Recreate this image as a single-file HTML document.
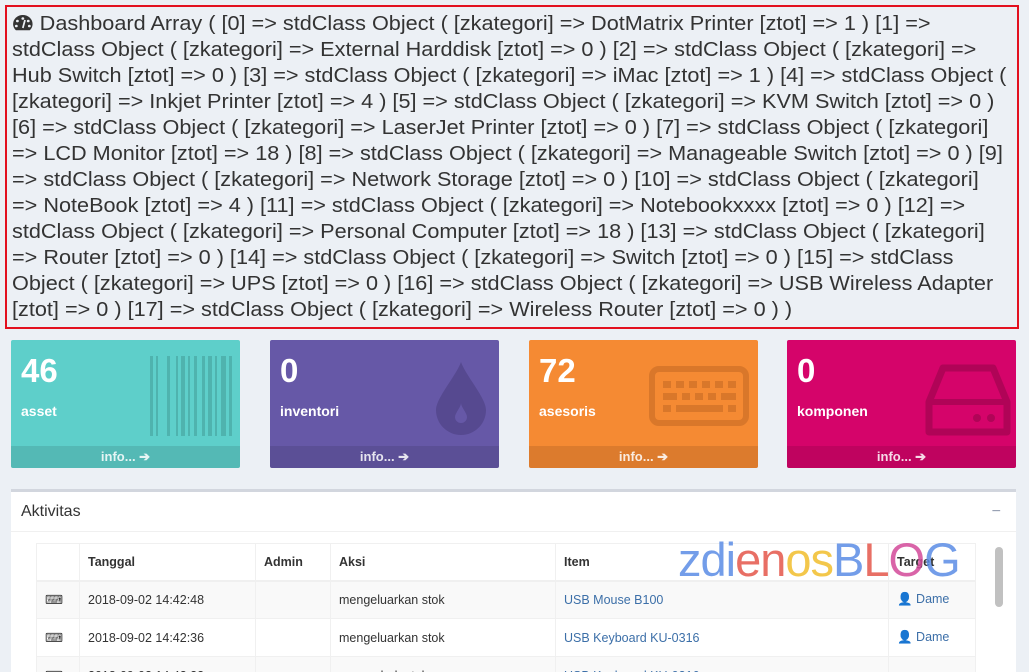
<!DOCTYPE html>
<html><head><meta charset="utf-8"><style>
*{box-sizing:border-box}
html,body{margin:0;width:1029px;height:672px;overflow:hidden}
body{background:#ecf0f5;font-family:"Liberation Sans",sans-serif;color:#333;position:relative}
.dump{position:absolute;left:5px;top:5px;width:1014px;height:324px;border:2px solid #e3101f;overflow:hidden}
.dump .in{position:absolute;left:5px;top:4px;font-size:20px;line-height:26px;color:#333;white-space:nowrap;transform:scaleX(1.083);transform-origin:0 0}
.sb{position:absolute;top:340px;width:229px;height:128px;border-radius:2px;color:#fff;overflow:hidden}
.sb .n{position:absolute;left:10px;top:12px;font-size:33px;font-weight:bold}
.sb .l{position:absolute;left:10px;top:63px;font-size:14px;font-weight:bold}
.sb .f{position:absolute;left:0;bottom:0;width:100%;height:22px;background:rgba(0,0,0,.1);text-align:center;font-size:13px;line-height:22px;font-weight:bold;color:rgba(255,255,255,.85)}
.box{position:absolute;left:11px;top:489px;width:1005px;height:183px;background:#fff;border-top:3px solid #d2d6de;overflow:hidden}
.hd{height:40px;border-bottom:1px solid #f0f0f0;font-size:16px;line-height:40px;padding-left:10px}
table{position:absolute;left:25px;top:51px;border-collapse:collapse;font-size:12.5px;width:940px}
td,th{border:1px solid #f0f0f0;padding:0 8px;text-align:left;height:38px}
th{height:37px;border-bottom:2px solid #f0f0f0}
tr.o td{background:#f9f9f9}
a{color:#3c6fa8;text-decoration:none}
</style></head><body>
<div class="dump"><div class="in"><svg width="20" height="17" viewBox="0 0 20 17" style="vertical-align:-1px"><path d="M10 1A9 9 0 0 0 1 10c0 2.5 1 4.7 2.6 6.3h12.8A9 9 0 0 0 19 10 9 9 0 0 0 10 1z" fill="#333"/><circle cx="10" cy="4.5" r="1.3" fill="#ecf0f5"/><circle cx="5" cy="7" r="1.3" fill="#ecf0f5"/><circle cx="15" cy="7" r="1.3" fill="#ecf0f5"/><circle cx="4" cy="12" r="1.3" fill="#ecf0f5"/><circle cx="16" cy="12" r="1.3" fill="#ecf0f5"/><path d="M10 14L12 6" stroke="#ecf0f5" stroke-width="1.6"/></svg> Dashboard Array ( [0] =&gt; stdClass Object ( [zkategori] =&gt; DotMatrix Printer [ztot] =&gt; 1 ) [1] =&gt;<br>stdClass Object ( [zkategori] =&gt; External Harddisk [ztot] =&gt; 0 ) [2] =&gt; stdClass Object ( [zkategori] =&gt;<br>Hub Switch [ztot] =&gt; 0 ) [3] =&gt; stdClass Object ( [zkategori] =&gt; iMac [ztot] =&gt; 1 ) [4] =&gt; stdClass Object (<br>[zkategori] =&gt; Inkjet Printer [ztot] =&gt; 4 ) [5] =&gt; stdClass Object ( [zkategori] =&gt; KVM Switch [ztot] =&gt; 0 )<br>[6] =&gt; stdClass Object ( [zkategori] =&gt; LaserJet Printer [ztot] =&gt; 0 ) [7] =&gt; stdClass Object ( [zkategori]<br>=&gt; LCD Monitor [ztot] =&gt; 18 ) [8] =&gt; stdClass Object ( [zkategori] =&gt; Manageable Switch [ztot] =&gt; 0 ) [9]<br>=&gt; stdClass Object ( [zkategori] =&gt; Network Storage [ztot] =&gt; 0 ) [10] =&gt; stdClass Object ( [zkategori]<br>=&gt; NoteBook [ztot] =&gt; 4 ) [11] =&gt; stdClass Object ( [zkategori] =&gt; Notebookxxxx [ztot] =&gt; 0 ) [12] =&gt;<br>stdClass Object ( [zkategori] =&gt; Personal Computer [ztot] =&gt; 18 ) [13] =&gt; stdClass Object ( [zkategori]<br>=&gt; Router [ztot] =&gt; 0 ) [14] =&gt; stdClass Object ( [zkategori] =&gt; Switch [ztot] =&gt; 0 ) [15] =&gt; stdClass<br>Object ( [zkategori] =&gt; UPS [ztot] =&gt; 0 ) [16] =&gt; stdClass Object ( [zkategori] =&gt; USB Wireless Adapter<br>[ztot] =&gt; 0 ) [17] =&gt; stdClass Object ( [zkategori] =&gt; Wireless Router [ztot] =&gt; 0 ) )</div></div>

<div class="sb" style="left:11px;background:#5ecfca">
<svg style="position:absolute;left:139px;top:16px" width="92" height="80"><g fill="#4fb3ae"><rect x="0" y="0" width="3" height="80"/><rect x="6" y="0" width="2" height="80"/><rect x="17" y="0" width="3" height="80"/><rect x="26" y="0" width="2" height="80"/><rect x="31" y="0" width="4" height="80"/><rect x="38" y="0" width="2" height="80"/><rect x="44" y="0" width="3" height="80"/><rect x="52" y="0" width="3" height="80"/><rect x="58" y="0" width="4" height="80"/><rect x="65" y="0" width="2" height="80"/><rect x="71" y="0" width="5" height="80"/><rect x="79" y="0" width="3" height="80"/></g></svg>
<div class="n">46</div><div class="l">asset</div><div class="f">info... ➔</div></div>
<div class="sb" style="left:270px;background:#6658a7">
<svg style="position:absolute;left:164px;top:20px" width="54" height="76" viewBox="0 0 54 76"><path d="M27 2C22 16 2 38 2 50a25 25 0 0 0 50 0C52 38 32 16 27 2z" fill="#564990"/><path d="M21 57c0-4 6-10 6-14 0 4 6 10 6 14a6 6 0 0 1-12 0z" fill="#6658a7"/></svg>
<div class="n">0</div><div class="l">inventori</div><div class="f">info... ➔</div></div>
<div class="sb" style="left:529px;background:#f58a33">
<svg style="position:absolute;left:120px;top:26px" width="100" height="60"><rect x="3" y="3" width="94" height="54" rx="7" fill="none" stroke="#d9772a" stroke-width="6"/><g fill="#d9772a"><rect x="14" y="15" width="8" height="7"/><rect x="27" y="15" width="8" height="7"/><rect x="40" y="15" width="8" height="7"/><rect x="53" y="15" width="8" height="7"/><rect x="66" y="15" width="8" height="7"/><rect x="79" y="15" width="8" height="7"/><rect x="14" y="27" width="14" height="7"/><rect x="33" y="27" width="8" height="7"/><rect x="46" y="27" width="8" height="7"/><rect x="59" y="27" width="8" height="7"/><rect x="72" y="27" width="15" height="7"/><rect x="14" y="39" width="8" height="7"/><rect x="27" y="39" width="47" height="7"/><rect x="79" y="39" width="8" height="7"/></g></svg>
<div class="n">72</div><div class="l">asesoris</div><div class="f">info... ➔</div></div>
<div class="sb" style="left:787px;background:#d5046a">
<svg style="position:absolute;left:138px;top:22px" width="86" height="76"><path d="M18 6h50l14 34v30H4V40z" fill="none" stroke="#b00457" stroke-width="7" stroke-linejoin="round"/><path d="M4 40h78" stroke="#b00457" stroke-width="6"/><circle cx="52" cy="56" r="4" fill="#b00457"/><circle cx="66" cy="56" r="4" fill="#b00457"/></svg>
<div class="n">0</div><div class="l">komponen</div><div class="f">info... ➔</div></div>

<div class="box"><div class="hd">Aktivitas<span style="position:absolute;right:15px;top:0;color:#97a0b3">−</span></div>
<table>
<tr><th style="width:43px"></th><th style="width:176px">Tanggal</th><th style="width:75px">Admin</th><th style="width:225px">Aksi</th><th style="width:333px">Item</th><th>Target</th></tr>
<tr class="o"><td>⌨</td><td>2018-09-02 14:42:48</td><td></td><td>mengeluarkan stok</td><td><a>USB Mouse B100</a></td><td><a>👤 Dame</a></td></tr>
<tr><td>⌨</td><td>2018-09-02 14:42:36</td><td></td><td>mengeluarkan stok</td><td><a>USB Keyboard KU-0316</a></td><td><a>👤 Dame</a></td></tr>
<tr class="o"><td>⌨</td><td>2018-09-02 14:42:22</td><td></td><td>menambah stok</td><td><a>USB Keyboard KU-0316</a></td><td></td></tr>
</table>
<div style="position:absolute;left:667px;top:40px;font-size:47px;line-height:56px;letter-spacing:-1px;opacity:.85"><span style="color:#5b8de6">zdi</span><span style="color:#e5574b">en</span><span style="color:#f2be2c">os</span><span style="color:#5b8de6">B</span><span style="color:#e5574b">L</span><span style="color:#d34a9a">O</span><span style="color:#5b8de6">G</span></div>
<div style="position:absolute;left:984px;top:55px;width:8px;height:60px;background:#c1c1c1;border-radius:4px"></div>
</div>
</body></html>
